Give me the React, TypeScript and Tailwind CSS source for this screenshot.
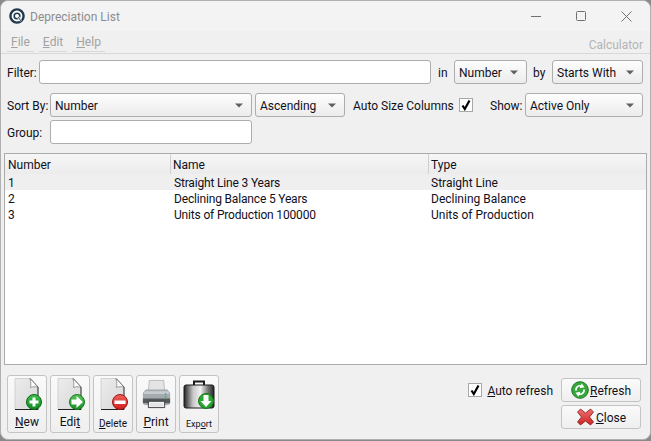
import React from 'react';

const FONT = 'font-["Roboto",sans-serif]';

const Caret = () => (
  <svg width="8" height="5" viewBox="0 0 8 5" className="shrink-0">
    <path d="M0 0.5h8L4 4.500z" fill="#606060" />
  </svg>
);

const Label = ({ className, children }: { className?: string; children: React.ReactNode }) => (
  <span className={`shrink-0 pt-[2px] ${className ?? ''}`}>{children}</span>
);

const Select = ({ label, className }: { label: string; className: string }) => (
  <div className={`flex h-6 shrink-0 items-center justify-between rounded-[3px] border border-[#adadad] bg-gradient-to-b from-[#fdfdfd] to-[#ececec] pl-[4px] pr-[8px] text-[#10101c] ${className}`}>
    <span className="pt-[2px]">{label}</span>
    <Caret />
  </div>
);

const Input = ({ className }: { className: string }) => (
  <div className={`h-6 shrink-0 rounded-[3px] border border-[#adadad] bg-white ${className}`} />
);

const Checkbox = () => (
  <div className="flex size-[14px] shrink-0 items-center justify-center border border-[#a8a8a8] bg-white">
    <svg width="12" height="12" viewBox="0 0 12 12">
      <path d="M2.500 6.500L4.800 10L9.500 1.500" fill="none" stroke="#000" strokeWidth="2.200" />
    </svg>
  </div>
);

const Page = ({ id, children }: { id: string; children: React.ReactNode }) => (
  <svg width="30" height="32" viewBox="0 0 30 32">
    <defs>
      <linearGradient id={id} x1="0" y1="0" x2="1" y2="1">
        <stop offset="0" stopColor="#ececec" />
        <stop offset="1" stopColor="#d8d8d8" />
      </linearGradient>
    </defs>
    <path d="M3 0.500H18L26 9V31H3z" fill={`url(#${id})`} />
    <path d="M18 0.500L26 9V31.500H3" fill="none" stroke="#222" strokeWidth="1" />
    <path d="M3 0.500H18M3 0.500V31" fill="none" stroke="#c4c4c4" strokeWidth="0.7" />
    <path d="M18 0.500C19 5 19 7 18.500 9.500C21 8.500 23 8.500 26 9z" fill="#fbfbfb" stroke="#666" strokeWidth="0.6" />
    {children}
  </svg>
);

const Badge = ({ id, light, color, dark, children }: { id: string; light: string; color: string; dark: string; children: React.ReactNode }) => (
  <g>
    <defs>
      <linearGradient id={id} x1="0" y1="0" x2="0" y2="1">
        <stop offset="0" stopColor={light} />
        <stop offset="1" stopColor={color} />
      </linearGradient>
    </defs>
    <circle cx="22" cy="24" r="7.500" fill={`url(#${id})`} stroke={dark} strokeWidth="1" />
    {children}
  </g>
);

const NewIcon = () => (
  <Page id="pg-new">
    <Badge id="bd-new" light="#3fbf48" color="#0f8a20" dark="#11661b">
      <path d="M20.500 19.500h3v3h3v3h-3v3h-3v-3h-3v-3h3z" fill="#fff" />
    </Badge>
  </Page>
);

const EditIcon = () => (
  <Page id="pg-edit">
    <Badge id="bd-edit" light="#55c558" color="#178f26" dark="#167a1e">
      <path d="M16.500 21.500h5v-3.500l6.500 6-6.500 6v-3.500h-5z" fill="#fff" />
    </Badge>
  </Page>
);

const DeleteIcon = () => (
  <Page id="pg-del">
    <Badge id="bd-del" light="#f0605a" color="#cf1f1f" dark="#9c1414">
      <rect x="16.500" y="22.500" width="11" height="3.500" fill="#fff" />
    </Badge>
  </Page>
);

const PrintIcon = () => (
  <svg width="29" height="32" viewBox="0 0 32 32">
    <path d="M8 1h16l1 13H7z" fill="#e4e4e4" stroke="#a2a2a2" strokeWidth="0.7" />
    <path d="M4 11h24l3 4v11a2 2 0 0 1-2 2H3a2 2 0 0 1-2-2V15z" fill="#a4aaad" />
    <path d="M3 13h26l1 3H2z" fill="#c8cccf" />
    <rect x="1" y="21" width="30" height="5" fill="#54595c" />
    <circle cx="26" cy="16" r="1" fill="#4aa3df" />
    <circle cx="26" cy="19" r="1" fill="#3cc24a" />
    <path d="M7 24h18v7H7z" fill="#f2f2f2" stroke="#333" strokeWidth="1" />
    <path d="M9 27h14M9 29h14" stroke="#c9c9c9" strokeWidth="0.7" />
  </svg>
);

const ExportIcon = () => (
  <svg width="32" height="30" viewBox="0 0 32 30">
    <defs>
      <linearGradient id="case" x1="0" y1="0" x2="1" y2="0">
        <stop offset="0" stopColor="#222" />
        <stop offset="0.3" stopColor="#c7c7c7" />
        <stop offset="0.55" stopColor="#f1f1f1" />
        <stop offset="0.8" stopColor="#777" />
        <stop offset="1" stopColor="#222" />
      </linearGradient>
    </defs>
    <path d="M11 6V2.500h10V6" fill="none" stroke="#1a1a1a" strokeWidth="2" />
    <rect x="1" y="6" width="30" height="23" rx="2" fill="url(#case)" stroke="#1a1a1a" />
    <circle cx="23" cy="22" r="7.500" fill="#2aa52f" stroke="#167a1e" />
    <path d="M20.500 16h5v6h3l-5.500 6-5.500-6h3z" fill="#fff" />
  </svg>
);

const RefreshIcon = () => (
  <svg width="18" height="18" viewBox="0 0 18 18">
    <circle cx="9" cy="9" r="8.300" fill="#34a83a" stroke="#1b7a22" />
    <path d="M4 9.500a5 5 0 0 1 6-5.400l.5-1.800 3 4-4.800 1 .6-1.700A3 3 0 0 0 6 9.500z" fill="#fff" />
    <path d="M14 8.500a5 5 0 0 1-6 5.400l-.5 1.800-3-4 4.800-1-.6 1.700A3 3 0 0 0 12 8.500z" fill="#fff" />
  </svg>
);

const CloseIcon = () => (
  <svg width="19" height="18" viewBox="0 0 18 18">
    <defs>
      <linearGradient id="cross" x1="0" y1="0" x2="0" y2="1">
        <stop offset="0" stopColor="#f07070" />
        <stop offset="1" stopColor="#cf2222" />
      </linearGradient>
    </defs>
    <path d="M4 1l5 4 5-4 3 3-4 5 4 5-3 3-5-4-5 4-3-3 4-5-4-5z" fill="url(#cross)" stroke="#7e1c1c" strokeWidth="0.8" />
  </svg>
);

const ToolButton = ({ icon, children }: { icon: React.ReactNode; children: React.ReactNode }) => (
  <div className="flex h-[58px] w-10 flex-col items-center justify-between rounded-[3px] border border-[#c4c4c4] bg-gradient-to-b from-[#fafafa] to-[#efefef] pb-[2px] pt-[2px] text-[#10101c]">
    <div className="flex h-8 items-center justify-center">{icon}</div>
    {children}
  </div>
);

const MenuItem = ({ children }: { children: React.ReactNode }) => (
  <span className="mr-[5px] flex h-[21px] items-center self-start border-b border-[#d8d8d8] px-[4px] pt-[2px]">{children}</span>
);

const ROWS = [
  ['1', 'Straight Line 3 Years', 'Straight Line'],
  ['2', 'Declining Balance 5 Years', 'Declining Balance'],
  ['3', 'Units of Production 100000', 'Units of Production'],
];

export default function App() {
  return (
    <div className={`h-[441px] w-[651px] overflow-hidden whitespace-pre bg-[#8a8a8a] text-xs ${FONT}`}>
      <div className="flex h-[440px] w-[651px] flex-col rounded-t-[8px] rounded-b-[8px] border border-[#b0b0b0] bg-[#f0f0f0]">
        <div className="flex h-[30px] shrink-0 items-center rounded-t-[8px] bg-[#f3f3f3] pl-[8px]">
          <svg width="16" height="16" viewBox="0 0 16 16">
            <circle cx="8" cy="8" r="6.600" fill="#fff" stroke="#1f3a4d" strokeWidth="2.400" />
            <circle cx="8" cy="8" r="2.800" fill="#fff" stroke="#1f3a4d" strokeWidth="1.600" />
            <path d="M9 9l3 4" stroke="#fff" strokeWidth="2.200" />
            <path d="M9 9l3 4" stroke="#1f3a4d" strokeWidth="1" />
          </svg>
          <span className="ml-[5px] pt-px text-[#8c8c8c]">Depreciation List</span>
          <div className="ml-auto mr-[18px] flex items-center gap-[35px]">
            <svg width="10" height="10" viewBox="0 0 10 10">
              <path d="M0 5.500h10" stroke="#707070" />
            </svg>
            <svg width="10" height="10" viewBox="0 0 10 10">
              <rect x="0.500" y="0.500" width="9" height="9" rx="1" fill="none" stroke="#707070" />
            </svg>
            <svg width="11" height="11" viewBox="0 0 11 11">
              <path d="M0.500 0.500l10 10M10.500 0.500l-10 10" stroke="#707070" />
            </svg>
          </div>
        </div>

        <div className="flex h-[23px] shrink-0 items-center border-b border-[#d8d8d8] pl-[6px] pr-[7px] text-[#a2a2a2]">
          <MenuItem><u>F</u>ile</MenuItem>
          <MenuItem><u>E</u>dit</MenuItem>
          <MenuItem><u>H</u>elp</MenuItem>
          <span className="ml-auto translate-y-[3px] text-[#b4b4b4]">Calculator</span>
        </div>

        <div className="flex items-center pl-[6px] pt-[6px] text-[#10101c]">
          <Label className="w-[32px]">Filter:</Label>
          <Input className="w-[392px]" />
          <Label className="ml-[7px] w-[16px]">in</Label>
          <Select label="Number" className="w-[73px]" />
          <Label className="ml-[6px] w-[19px]">by</Label>
          <Select label="Starts With" className="w-[91px]" />
        </div>

        <div className="flex items-center pl-[6px] pt-[9px] text-[#10101c]">
          <Label className="w-[43px]">Sort By:</Label>
          <Select label="Number" className="w-[202px]" />
          <Select label="Ascending" className="ml-[3px] w-[90px]" />
          <Label className="ml-[8px] w-[100px]">Auto Size Columns</Label>
          <div className="ml-[6px]"><Checkbox /></div>
          <Label className="ml-[17px] w-[35px]">Show:</Label>
          <Select label="Active Only" className="w-[118px]" />
        </div>

        <div className="flex items-center pl-[6px] pt-[3px] text-[#10101c]">
          <Label className="w-[43px]">Group:</Label>
          <Input className="w-[202px]" />
        </div>

        <div className="mx-[3px] mt-[9px] h-[212px] shrink-0 border border-[#ababab] bg-white text-[#10101c]">
          <div className="flex h-[20px] bg-gradient-to-b from-[#f6f6f6] to-[#ececec] leading-[23px]">
            <div className="w-[166px] border-r border-[#d0d0d0] pl-[3px]">Number</div>
            <div className="w-[258px] border-r border-[#d0d0d0] pl-[2px]">Name</div>
            <div className="flex-1 pl-[2px]">Type</div>
          </div>
          {ROWS.map((row, i) => (
            <div key={row[0]} className={`flex h-4 leading-[19px] ${i === 0 ? 'bg-[#efefef]' : ''}`}>
              <div className="w-[166px] pl-[3px]">{row[0]}</div>
              <div className="w-[258px] pl-[3px] tracking-[-0.17px]">{row[1]}</div>
              <div className="pl-[2px]">{row[2]}</div>
            </div>
          ))}
        </div>

        <div className="flex flex-1 items-start justify-between pl-[6px] pr-[9px] pt-[10px] text-[#10101c]">
          <div className="flex gap-[3px]">
            <ToolButton icon={<NewIcon />}><span><u>N</u>ew</span></ToolButton>
            <ToolButton icon={<EditIcon />}><span>Edi<u>t</u></span></ToolButton>
            <ToolButton icon={<DeleteIcon />}><span className="text-[10px]"><u>D</u>elete</span></ToolButton>
            <ToolButton icon={<PrintIcon />}><span><u>P</u>rint</span></ToolButton>
            <ToolButton icon={<ExportIcon />}><span className="text-[9px]">Exp<u>o</u>rt</span></ToolButton>
          </div>
          <div className="flex items-start gap-[8px] pt-[3px]">
            <div className="flex h-6 items-center gap-[5px]">
              <Checkbox />
              <span className="pt-[2px]"><u>A</u>uto refresh</span>
            </div>
            <div className="flex flex-col gap-[3px]">
              <div className="flex h-6 w-20 items-center justify-center rounded-[3px] border border-[#c4c4c4] bg-gradient-to-b from-[#fafafa] to-[#efefef]">
                <RefreshIcon />
                <span className="ml-px pt-[2px]"><u>R</u>efresh</span>
              </div>
              <div className="flex h-6 w-20 items-center justify-center rounded-[3px] border border-[#c4c4c4] bg-gradient-to-b from-[#fafafa] to-[#efefef]">
                <CloseIcon />
                <span className="ml-px pt-[2px]"><u>C</u>lose</span>
              </div>
            </div>
          </div>
        </div>
      </div>
    </div>
  );
}
